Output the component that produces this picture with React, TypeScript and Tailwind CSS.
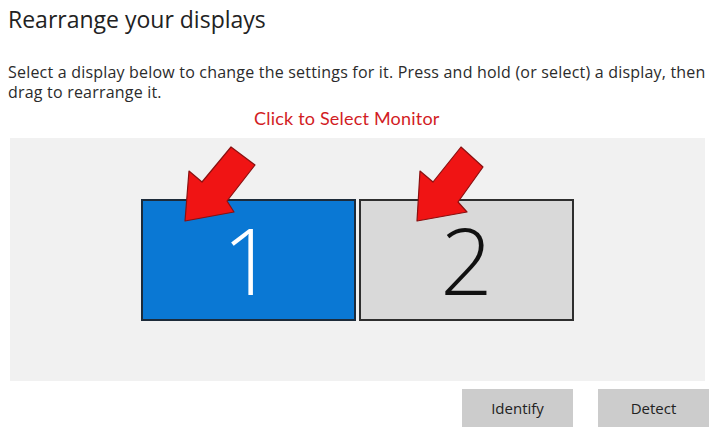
export default function App() {
  return (
    <div className="relative w-[720px] h-[444px] overflow-hidden bg-white font-['Open_Sans',sans-serif] text-[#1f1f1f]">
      <h1 className="pl-[8px] pt-[4px] text-[23px] leading-[31px] text-[#222]">Rearrange your displays</h1>

      <p className="mt-[27px] pl-[8px] pr-[4px] text-[16px] leading-[20px] tracking-[0.2px] text-[#2b2b2b]">
        Select a display below to change the settings for it. Press and hold (or select) a display, then drag to
        rearrange it.
      </p>

      <div className="ml-[254px] mt-[6px] font-['Lato',sans-serif] text-[18px] leading-[20px] tracking-[0.2px] text-[#d21c24]">
        Click to Select Monitor
      </div>

      <div className="mx-[10px] mt-[10px] h-[243px] w-[695px] bg-[#f1f1f1] pl-[131px] pt-[61px]">
        <div className="flex gap-[3px]">
          <div className="flex h-[122px] w-[215px] items-center justify-center border-2 border-[#1d2b3a] bg-[#0a78d4]">
            <span className="text-[92px] font-light leading-none text-white">1</span>
          </div>
          <div className="flex h-[122px] w-[215px] items-center justify-center border-2 border-[#2e2e2e] bg-[#d9d9d9]">
            <span className="text-[92px] font-light leading-none text-[#111]">2</span>
          </div>
        </div>
      </div>

      <div className="mt-[8px] flex justify-end gap-[25px] pr-[11px]">
        <button className="h-[38px] w-[111px] bg-[#cccccc] text-[15px] text-[#222]">Identify</button>
        <button className="h-[38px] w-[111px] bg-[#cccccc] text-[15px] text-[#222]">Detect</button>
      </div>

      {/* callout arrows drawn on top of the screenshot */}
      <svg className="pointer-events-none absolute inset-0" width="720" height="444" viewBox="0 0 720 444">
        <polygon
          points="185,221 189,171 202,182 231,147 255,165 227,201 234,212"
          fill="#f01414"
          stroke="#8a1010"
          strokeWidth="1.2"
          strokeLinejoin="round"
        />
        <polygon
          points="417,221 420,171 433,182 461,147 483,167 458,202 467,212"
          fill="#f01414"
          stroke="#8a1010"
          strokeWidth="1.2"
          strokeLinejoin="round"
        />
      </svg>
    </div>
  );
}
